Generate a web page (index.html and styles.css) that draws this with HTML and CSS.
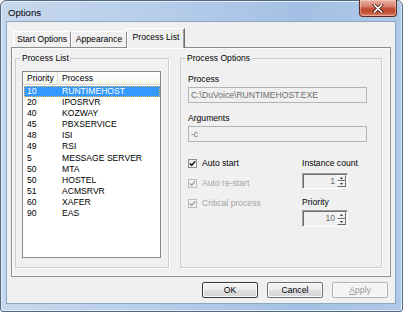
FILE: index.html
```html
<!DOCTYPE html>
<html>
<head>
<meta charset="utf-8">
<link rel="stylesheet" href="styles.css">
</head>
<body>
<div class="window">
  <div class="titlebar">
    <span class="title">Options</span>
    <div class="close">
      <svg width="12" height="9" viewBox="0 0 12 9">
        <path d="M2.5 1 L9.5 8 M9.5 1 L2.5 8" stroke="#4a1e16" stroke-width="3.2" stroke-linecap="square" fill="none"/>
        <path d="M2.5 1 L9.5 8 M9.5 1 L2.5 8" stroke="#ffffff" stroke-width="1.6" stroke-linecap="square" fill="none"/>
      </svg>
    </div>
  </div>
  <div class="client">
    <div class="tabs">
      <div class="tab t1">Start Options</div>
      <div class="tab t2">Appearance</div>
      <div class="tab active">Process List</div>
    </div>
    <div class="page">
      <fieldset class="group g-list">
        <legend>Process List</legend>
        <div class="list">
          <div class="lv-head">
            <div class="c1">Priority</div>
            <div class="c2">Process</div>
          </div>
          <div class="lv-body">
            <div class="row sel"><div class="c1">10</div><div class="c2">RUNTIMEHOST</div></div>
            <div class="row"><div class="c1">20</div><div class="c2">IPOSRVR</div></div>
            <div class="row"><div class="c1">40</div><div class="c2">KOZWAY</div></div>
            <div class="row"><div class="c1">45</div><div class="c2">PBXSERVICE</div></div>
            <div class="row"><div class="c1">48</div><div class="c2">ISI</div></div>
            <div class="row"><div class="c1">49</div><div class="c2">RSI</div></div>
            <div class="row"><div class="c1">5</div><div class="c2">MESSAGE SERVER</div></div>
            <div class="row"><div class="c1">50</div><div class="c2">MTA</div></div>
            <div class="row"><div class="c1">50</div><div class="c2">HOSTEL</div></div>
            <div class="row"><div class="c1">51</div><div class="c2">ACMSRVR</div></div>
            <div class="row"><div class="c1">60</div><div class="c2">XAFER</div></div>
            <div class="row"><div class="c1">90</div><div class="c2">EAS</div></div>
          </div>
        </div>
      </fieldset>
      <fieldset class="group g-opts">
        <legend>Process Options</legend>
        <div class="label l-first">Process</div>
        <div class="textbox">C:\DuVoice\RUNTIMEHOST.EXE</div>
        <div class="label l-args">Arguments</div>
        <div class="textbox">-c</div>
        <div class="lower">
          <div class="checks">
            <div class="check">
              <span class="box"><svg width="7" height="7" viewBox="0 0 7 7"><path d="M0.8 3.4 L2.7 5.3 L6.2 1.2" stroke="#1a1a1a" stroke-width="1.5" fill="none"/></svg></span>
              <span>Auto start</span>
            </div>
            <div class="check disabled">
              <span class="box"><svg width="7" height="7" viewBox="0 0 7 7"><path d="M0.8 3.4 L2.7 5.3 L6.2 1.2" stroke="#a8a8a8" stroke-width="1.5" fill="none"/></svg></span>
              <span>Auto re-start</span>
            </div>
            <div class="check disabled">
              <span class="box"><svg width="7" height="7" viewBox="0 0 7 7"><path d="M0.8 3.4 L2.7 5.3 L6.2 1.2" stroke="#a8a8a8" stroke-width="1.5" fill="none"/></svg></span>
              <span>Critical process</span>
            </div>
          </div>
          <div class="spins">
            <div class="label">Instance count</div>
            <div class="spin s-first">
              <div class="val">1</div>
              <div class="arrows">
                <div class="arr"><svg width="3" height="2" viewBox="0 0 3 2"><path d="M0 2 L1.5 0 L3 2Z" fill="#333"/></svg></div>
                <div class="arr"><svg width="3" height="2" viewBox="0 0 3 2"><path d="M0 0 L1.5 2 L3 0Z" fill="#333"/></svg></div>
              </div>
            </div>
            <div class="label l-prio">Priority</div>
            <div class="spin s-second">
              <div class="val">10</div>
              <div class="arrows">
                <div class="arr"><svg width="3" height="2" viewBox="0 0 3 2"><path d="M0 2 L1.5 0 L3 2Z" fill="#333"/></svg></div>
                <div class="arr"><svg width="3" height="2" viewBox="0 0 3 2"><path d="M0 0 L1.5 2 L3 0Z" fill="#333"/></svg></div>
              </div>
            </div>
          </div>
        </div>
      </fieldset>
    </div>
    <div class="buttons">
      <div class="btn default">OK</div>
      <div class="btn">Cancel</div>
      <div class="btn disabled"><u>A</u>pply</div>
    </div>
  </div>
</div>
</body>
</html>
```

FILE: styles.css
```css
* { box-sizing: border-box; }
html, body { margin: 0; padding: 0; background: #ffffff; }
body {
  width: 403px;
  height: 312px;
  overflow: hidden;
  font-family: "Liberation Sans", Arial, sans-serif;
  font-size: 8.6px;
  color: #000;
}
.window {
  width: 403px;
  height: 312px;
  border: 1px solid #56687f;
  border-radius: 6px 6px 3px 3px;
  padding: 0 6px 7px 5px;
  display: flex;
  flex-direction: column;
  background: linear-gradient(to right, #c6d8ee 0%, #b6cdea 40%, #a3c0e4 75%, #afc9e8 100%);
  box-shadow: inset 0 0 0 1px #e4eefa;
}
.titlebar {
  height: 20px;
  display: flex;
  align-items: flex-start;
  justify-content: space-between;
}
.title {
  font-size: 9.6px;
  margin-top: 6px;
  margin-left: 2px;
  color: #000;
}
.close {
  width: 38px;
  height: 17px;
  margin-top: -1px;
  margin-right: -1px;
  border: 1px solid #5e2a22;
  border-top: none;
  border-radius: 0 0 4px 4px;
  background: linear-gradient(#eab1a4 0%, #d8826f 40%, #c14a33 55%, #c4533a 80%, #d98a6f 100%);
  display: flex;
  align-items: center;
  justify-content: center;
  box-shadow: inset 0 0 0 1px rgba(255,220,210,0.45);
}
.client {
  flex: 1;
  border: 1px solid #8ea5c2;
  background: #f0f0f0;
  display: flex;
  flex-direction: column;
}
.tabs {
  height: 19px;
  margin: 6px 4px 0 4px;
  padding-left: 2px;
  display: flex;
  align-items: flex-end;
  position: relative;
  z-index: 1;
}
.tab {
  height: 16px;
  line-height: 15px;
  text-align: center;
  border-top: 1px solid #ffffff;
  border-left: 1px solid #ffffff;
  border-right: 1px solid #8a8a8a;
  background: #f0f0f0;
  white-space: nowrap;
}
.t1 { width: 58px; }
.t2 { width: 56px; }
.tab.active {
  width: 58px;
  height: 20px;
  line-height: 17px;
  margin-bottom: -1px;
  border-right: 1px solid #6b6b6b;
  box-shadow: inset -1px 0 0 #a0a0a0;
}
.page {
  height: 230px;
  margin: 0 4px 0 4px;
  border: 1px solid #8c8c8c;
  box-shadow: inset 0 0 0 1px #fbfbfb;
  background: #f0f0f0;
  padding: 5px 8px 8px 3px;
  display: flex;
  gap: 11px;
}
.group {
  margin: 0;
  padding: 0;
  min-width: 0;
  height: 215px;
  border: 1px solid #cfcfcf;
  box-shadow: 1px 1px 0 #ffffff;
}
.group legend {
  margin-left: 5px;
  padding: 0 1px;
  line-height: 10px;
}
.g-list { width: 154px; }
.g-opts { width: 202px; padding-left: 7px; }
.g-opts legend { margin-left: -2px; }
.list {
  margin: 8px 0 0 6px;
  width: 139px;
  height: 187px;
  border: 1px solid #828790;
  background: #ffffff;
}
.lv-head {
  height: 13px;
  display: flex;
  border-bottom: 1px solid #d5d5d5;
  background: linear-gradient(#ffffff, #f5f6f7);
  line-height: 12px;
}
.lv-head .c1 {
  width: 35px;
  padding-left: 4px;
  border-right: 1px solid #dadada;
}
.lv-head .c2 { padding-left: 4px; }
.lv-body { padding-top: 1px; }
.row {
  height: 11.1px;
  line-height: 11px;
  display: flex;
  margin-left: 1px;
}
.row .c1 { width: 34px; padding-left: 3px; }
.row .c2 { padding-left: 4px; }
.row.sel {
  background: #3399ff;
  color: #ffffff;
  outline: 1px dotted #e9b36a;
  outline-offset: -1px;
}
.label { line-height: 10px; height: 10px; white-space: nowrap; }
.l-first { margin-top: 11px; }
.l-args { margin-top: 10px; }
.textbox {
  margin-top: 3px;
  width: 179px;
  height: 16px;
  border: 1px solid #b4b4b4;
  background: #f0f0f0;
  color: #6d6d6d;
  padding-left: 2px;
  line-height: 14px;
}
.lower {
  margin-top: 16px;
  display: flex;
}
.checks { width: 114px; }
.check {
  height: 10px;
  line-height: 10px;
  margin-bottom: 10px;
  display: flex;
  align-items: center;
  white-space: nowrap;
}
.check .box {
  width: 9px;
  height: 9px;
  border: 1px solid #8e8f8f;
  background: linear-gradient(135deg, #e6e6e6, #ffffff);
  margin-right: 5px;
  display: flex;
  align-items: center;
  justify-content: center;
}
.check.disabled { color: #a3a3a3; }
.check.disabled .box { border-color: #bcbcbc; background: #f4f4f4; }
.spins { width: 46px; }
.spin {
  width: 46px;
  height: 16px;
  display: flex;
  border-style: solid;
  border-width: 1px;
  border-color: #a0a0a0 #ffffff #ffffff #a0a0a0;
  box-shadow: inset 1px 1px 0 #6d6d6d;
  background: #f0f0f0;
  padding: 1px;
}
.s-first { margin-top: 5px; }
.l-prio { margin-top: 8px; }
.s-second { margin-top: 3px; height: 17px; }
.val {
  flex: 1;
  text-align: right;
  color: #6d6d6d;
  line-height: 13px;
  padding-right: 2px;
}
.arrows {
  width: 9px;
  display: flex;
  flex-direction: column;
}
.arr {
  flex: 1;
  border-style: solid;
  border-width: 1px;
  border-color: #ffffff #6d6d6d #6d6d6d #ffffff;
  background: #f0f0f0;
  display: flex;
  align-items: center;
  justify-content: center;
}
.buttons {
  margin-top: 5px;
  padding-right: 7px;
  display: flex;
  justify-content: flex-end;
  gap: 9px;
}
.btn {
  width: 56px;
  height: 16px;
  line-height: 14px;
  text-align: center;
  border: 1px solid #707070;
  border-radius: 2px;
  background: linear-gradient(#f4f4f4 0%, #ececec 50%, #dfdfdf 51%, #d6d6d6 100%);
  box-shadow: inset 0 0 0 1px #fbfbfb;
}
.btn.default { border-color: #3a3a3a; }
.btn.disabled {
  color: #9a9a9a;
  border-color: #adb2b5;
  background: #f4f4f4;
}
.btn u { text-decoration: underline; }
```
